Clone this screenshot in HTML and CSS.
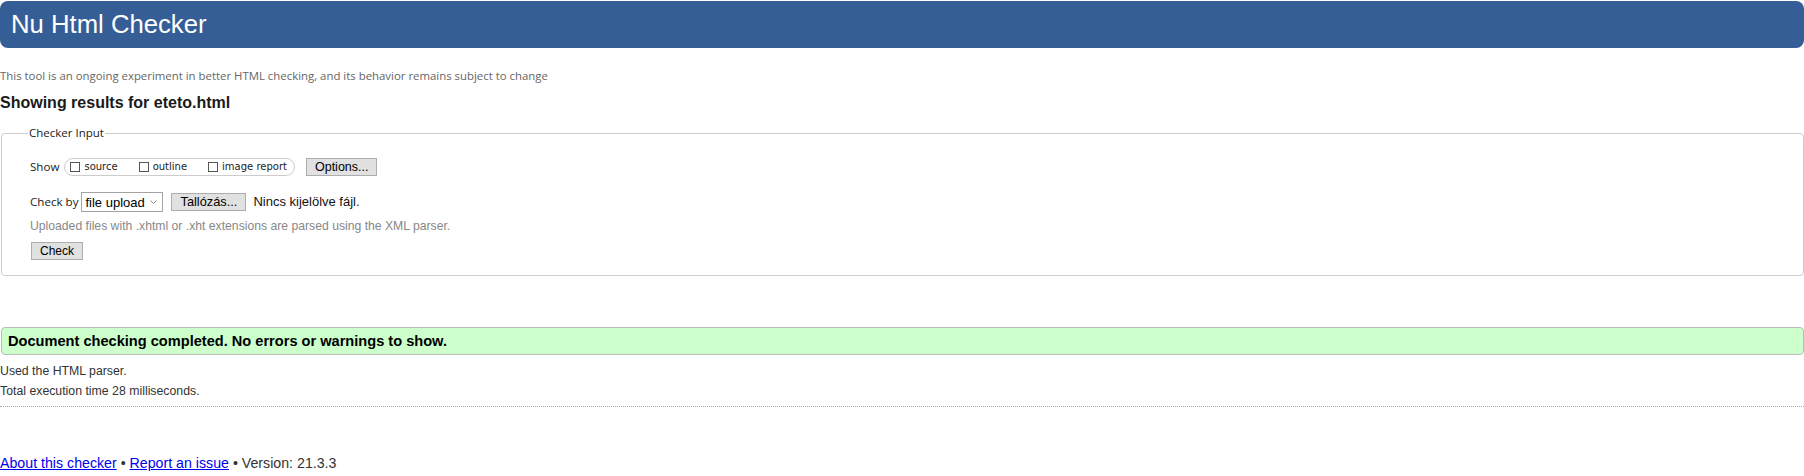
FILE: index.html
```html
<!DOCTYPE html>
<html lang="en">
<head>
<meta charset="utf-8">
<title>Showing results for eteto.html - Nu Html Checker</title>
<link rel="stylesheet" href="styles.css">
</head>
<body>
<header class="masthead"><h1 class="title">Nu Html Checker</h1></header>
<p class="tagline">This tool is an ongoing experiment in better HTML checking, and its behavior remains subject to change</p>
<h2 class="results">Showing results for eteto.html</h2>
<form class="input-form">
  <fieldset class="checker">
    <legend class="legend">Checker Input</legend>
    <div class="row row-show">
      <span class="label">Show</span>
      <span class="group">
        <span class="opt"><span class="box"></span><span class="opt-text">source</span></span>
        <span class="opt"><span class="box"></span><span class="opt-text">outline</span></span>
        <span class="opt opt-last"><span class="box"></span><span class="opt-text">image report</span></span>
      </span>
      <button type="button" class="btn btn-options">Options...</button>
    </div>
    <div class="row row-by">
      <span class="label">Check by</span>
      <span class="select-wrap">
        <select class="select"><option>file upload</option></select>
        <svg class="chev" width="7" height="4" viewBox="0 0 7 4"><polyline points="0.5,0.5 3.5,3.5 6.5,0.5" fill="none" stroke="#8a8a8a" stroke-width="1"/></svg>
      </span>
      <button type="button" class="btn btn-browse">Tallózás...</button>
      <span class="nofile">Nincs kijelölve fájl.</span>
    </div>
    <p class="note">Uploaded files with .xhtml or .xht extensions are parsed using the XML parser.</p>
    <button type="button" class="btn btn-check">Check</button>
  </fieldset>
</form>
<p class="success">Document checking completed. No errors or warnings to show.</p>
<p class="meta">Used the HTML parser.</p>
<p class="meta meta-time">Total execution time 28 milliseconds.</p>
<hr class="sep">
<footer class="footer"><a class="link" href="#">About this checker</a> • <a class="link" href="#">Report an issue</a> • Version: 21.3.3</footer>
</body>
</html>
```
FILE: styles.css
```css
html, body {
  margin: 0;
  padding: 0;
  background: #fff;
}
body {
  font-family: "Liberation Sans", Arial, sans-serif;
  color: #222;
}
.masthead {
  margin: 1px 0 0 0;
}
.title {
  margin: 0;
  height: 47px;
  line-height: 47px;
  padding-left: 11px;
  font-size: 25.7px;
  font-weight: normal;
  color: #fff;
  background: #365e96;
  border-radius: 8px;
}
.tagline {
  margin: 20px 0 0 0;
  font-family: "Open Sans", sans-serif;
  font-size: 11.4px;
  line-height: 16px;
  color: #666;
}
.results {
  margin: 9px 0 0 0;
  font-size: 16px;
  line-height: 20px;
  font-weight: bold;
  color: #1a1a1a;
}
.input-form {
  margin: 12px 0 0 1px;
}
.checker {
  margin: 0;
  border: 1px solid #ccc;
  border-radius: 4px;
  padding: 0 0 15px 28px;
  min-width: 0;
}
.legend {
  font-family: "Open Sans", sans-serif;
  font-size: 11.5px;
  line-height: 16px;
  padding: 0 1px;
  margin-left: -2px;
  color: #222;
}
.row {
  display: flex;
  align-items: center;
}
.row-show {
  margin-top: 17px;
  height: 18px;
}
.row-by {
  margin-top: 16px;
  height: 20px;
}
.label {
  font-family: "Open Sans", sans-serif;
  font-size: 11.6px;
  line-height: 18px;
  color: #222;
}
.row-by .label {
  line-height: 20px;
}
.group {
  display: flex;
  align-items: center;
  box-sizing: border-box;
  height: 18px;
  margin-left: 5px;
  padding: 0 7px 0 5px;
  border: 1px solid #ccc;
  border-radius: 9px;
}
.opt {
  display: flex;
  align-items: center;
  margin-right: 21px;
}
.opt-last {
  margin-right: 0;
}
.box {
  box-sizing: border-box;
  width: 10px;
  height: 10px;
  border: 1px solid #555;
  background: #fff;
}
.opt-text {
  margin-left: 4px;
  font-family: "DejaVu Sans", Verdana, sans-serif;
  font-size: 10px;
  line-height: 14px;
  color: #222;
}
.btn {
  box-sizing: border-box;
  height: 18px;
  margin: 0;
  padding: 0 8px;
  border: 1px solid #adadad;
  border-radius: 0;
  background: #e1e1e1;
  font-family: "Liberation Sans", Arial, sans-serif;
  color: #000;
  line-height: 16px;
}
.btn-options {
  margin-left: 11px;
  font-size: 12.5px;
}
.select-wrap {
  position: relative;
  display: block;
  margin-left: 3px;
  height: 20px;
}
.select {
  -webkit-appearance: none;
  appearance: none;
  box-sizing: border-box;
  width: 82px;
  height: 20px;
  margin: 0;
  padding: 0 0 0 3px;
  border: 1px solid #a4a4a4;
  border-radius: 0;
  background: #fff;
  font-family: "Liberation Sans", Arial, sans-serif;
  font-size: 13px;
  color: #000;
}
.chev {
  position: absolute;
  right: 6px;
  top: 8px;
}
.btn-browse {
  margin-left: 8px;
  font-size: 12.8px;
}
.nofile {
  margin-left: 7px;
  font-size: 13px;
  line-height: 20px;
  color: #111;
}
.note {
  margin: 6px 0 0 0;
  font-size: 12.2px;
  line-height: 16px;
  color: #888;
}
.btn-check {
  display: block;
  margin-top: 8px;
  margin-left: 1px;
  font-size: 12px;
}
.success {
  margin: 51px 0 0 1px;
  padding: 0 0 0 6px;
  height: 26px;
  line-height: 26px;
  border: 1px solid #bbb;
  border-radius: 4px;
  background: #ccffcc;
  font-size: 14.6px;
  font-weight: bold;
  color: #000;
}
.meta {
  margin: 8px 0 0 0;
  font-size: 12.3px;
  line-height: 16px;
  color: #333;
}
.meta-time {
  margin-top: 4px;
}
.sep {
  margin: 7px 0 0 0;
  height: 0;
  border: 0;
  border-top: 1px dotted #aaa;
}
.footer {
  margin-top: 47px;
  font-size: 14.2px;
  line-height: 18px;
  color: #333;
}
.link {
  color: #0000ee;
  text-decoration: underline;
}
```
